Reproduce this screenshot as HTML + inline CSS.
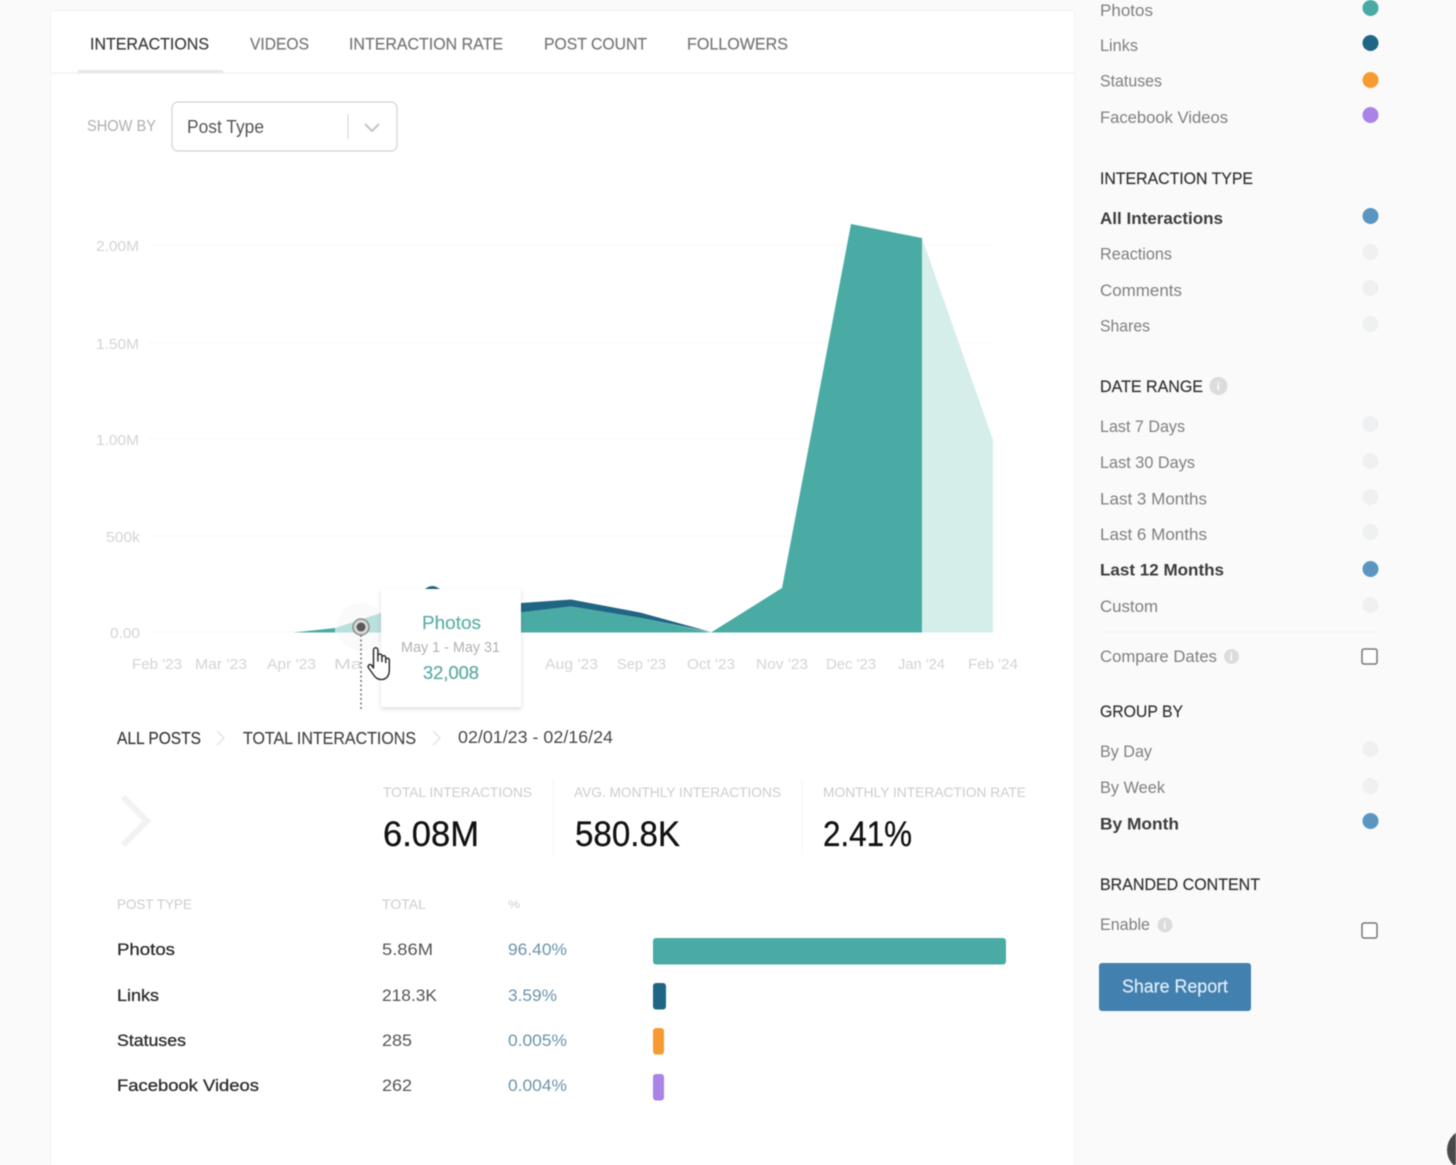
<!DOCTYPE html>
<html lang="en"><head><meta charset="utf-8"><title>Interactions report</title>
<style>
html,body{margin:0;padding:0;width:1456px;height:1165px;overflow:hidden;background:#fafafa}
svg{display:block;filter:blur(.4px)}
text{font-family:"Liberation Sans",sans-serif}
.tab{font-size:17px;fill:#777;stroke:#777;stroke-width:.2}
.h{font-size:17px;fill:#333;stroke:#333;stroke-width:.2}
.i{font-size:16.5px;fill:#808080}
.b{font-size:16.5px;fill:#3d3d3d;font-weight:bold}
.ax{font-size:15px;fill:#d4d4d4}
.cap{font-size:14px;fill:#cdcdcd}
.big{font-size:35px;fill:#111;stroke:#111;stroke-width:.3}
.n{font-size:17px;fill:#2c2c2c;stroke:#2c2c2c;stroke-width:.3}
.v{font-size:17px;fill:#555}
.p{font-size:17px;fill:#6b93ab}
.off{fill:#eff0f1}
.on{fill:#5b96c2}
.inf{fill:#dcdcdc}
.inft{font-size:11px;fill:#fff;font-weight:bold}
.cb{fill:#fff;stroke:#777;stroke-width:1.5}
</style></head><body>
<svg width="1456" height="1165" viewBox="0 0 1456 1165" xmlns="http://www.w3.org/2000/svg">
<defs><filter id="s" x="-20%" y="-20%" width="140%" height="140%"><feDropShadow dx="0" dy="2" stdDeviation="2.500" flood-color="#000" flood-opacity=".14"/></filter></defs>
<rect width="1456" height="1165" fill="#fafafa"/>
<rect x="50" y="10" width="1025" height="1170" rx="3" fill="#f3f3f3"/>
<rect x="51" y="11" width="1023" height="1170" rx="3" fill="#fff"/>

<line x1="51" y1="73" x2="1074" y2="73" stroke="#f2f2f2" stroke-width="1.5"/>
<rect x="78" y="70" width="145" height="3" fill="#e8e8e8"/>
<text class="tab" style="fill:#3c3c3c;stroke:#3c3c3c" x="90" y="49.500" textLength="119" lengthAdjust="spacingAndGlyphs">INTERACTIONS</text>
<text class="tab" x="250" y="49.500" textLength="59" lengthAdjust="spacingAndGlyphs">VIDEOS</text>
<text class="tab" x="349" y="49.500" textLength="154" lengthAdjust="spacingAndGlyphs">INTERACTION RATE</text>
<text class="tab" x="544" y="49.500" textLength="103" lengthAdjust="spacingAndGlyphs">POST COUNT</text>
<text class="tab" x="687" y="49.500" textLength="101" lengthAdjust="spacingAndGlyphs">FOLLOWERS</text>

<text x="87" y="131" font-size="15.500" fill="#aeaeae" textLength="69" lengthAdjust="spacingAndGlyphs">SHOW BY</text>
<rect x="172" y="102" width="225" height="49" rx="6" fill="#fff" stroke="#d2d2d2" stroke-width="1.200"/>
<text x="187" y="133" font-size="18" fill="#555" textLength="77" lengthAdjust="spacingAndGlyphs">Post Type</text>
<line x1="348" y1="114" x2="348" y2="139" stroke="#d0d0d0"/>
<path d="M365 124l7 7 7-7" fill="none" stroke="#c4c4c4" stroke-width="2"/>

<g stroke="#fafafa" stroke-width="1">
<line x1="148" y1="245" x2="992" y2="245"/><line x1="148" y1="343" x2="992" y2="343"/>
<line x1="148" y1="439" x2="992" y2="439"/><line x1="148" y1="536" x2="992" y2="536"/>
<line x1="148" y1="632" x2="992" y2="632"/>
</g>
<text class="ax" x="96" y="251" textLength="43" lengthAdjust="spacingAndGlyphs">2.00M</text>
<text class="ax" x="96" y="349" textLength="43" lengthAdjust="spacingAndGlyphs">1.50M</text>
<text class="ax" x="96" y="445" textLength="43" lengthAdjust="spacingAndGlyphs">1.00M</text>
<text class="ax" x="106" y="542" textLength="34" lengthAdjust="spacingAndGlyphs">500k</text>
<text class="ax" x="110" y="638" textLength="30" lengthAdjust="spacingAndGlyphs">0.00</text>

<path d="M922 238L993 440V632.500H922Z" fill="#d6eeea"/>
<path d="M293 632.500L335 628V632.500Z" fill="#4aaba5"/>
<path d="M424 590Q432 582 441 590Z" fill="#1f6685"/>
<path d="M521 603L571 599.500L641 612.700L711 632L641 618L571 606.500L521 612.500Z" fill="#1f6685"/>
<path d="M521 612.500L571 606.500L641 618L711 632.500H521Z" fill="#4aaba5"/>
<path d="M711 632.500L782 588L851 224L922 238V632.500Z" fill="#4aaba5"/>

<circle cx="361" cy="627" r="24" fill="#fafafa"/>
<path d="M335 628L381 613V632.500H335Z" fill="#b9e0dc"/>
<circle cx="361" cy="627" r="8" fill="#d8d8d8" stroke="#8c8c8c" stroke-width="1.500"/>
<circle cx="361" cy="627" r="4.500" fill="#5a5a5a"/>
<line x1="361" y1="635" x2="361" y2="710" stroke="#777" stroke-width="1.600" stroke-dasharray="2 2.500"/>

<text class="ax" x="132" y="669" textLength="50" lengthAdjust="spacingAndGlyphs">Feb '23</text>
<text class="ax" x="195" y="669" textLength="52" lengthAdjust="spacingAndGlyphs">Mar '23</text>
<text class="ax" x="267" y="669" textLength="49" lengthAdjust="spacingAndGlyphs">Apr '23</text>
<text class="ax" x="334" y="669" textLength="28" lengthAdjust="spacingAndGlyphs">Ma</text>
<text class="ax" x="545" y="669" textLength="53" lengthAdjust="spacingAndGlyphs">Aug '23</text>
<text class="ax" x="617" y="669" textLength="49" lengthAdjust="spacingAndGlyphs">Sep '23</text>
<text class="ax" x="687" y="669" textLength="48" lengthAdjust="spacingAndGlyphs">Oct '23</text>
<text class="ax" x="756" y="669" textLength="52" lengthAdjust="spacingAndGlyphs">Nov '23</text>
<text class="ax" x="826" y="669" textLength="50" lengthAdjust="spacingAndGlyphs">Dec '23</text>
<text class="ax" x="898" y="669" textLength="47" lengthAdjust="spacingAndGlyphs">Jan '24</text>
<text class="ax" x="968" y="669" textLength="50" lengthAdjust="spacingAndGlyphs">Feb '24</text>

<rect x="381" y="589" width="140" height="118" rx="1" fill="#fff" filter="url(#s)"/>
<text x="422" y="629" font-size="18" fill="#5db0a8" stroke="#5db0a8" stroke-width=".2" textLength="59" lengthAdjust="spacingAndGlyphs">Photos</text>
<text x="401" y="652" font-size="14.500" fill="#b2b2b2" textLength="99" lengthAdjust="spacingAndGlyphs">May 1 - May 31</text>
<text x="423" y="679" font-size="18" fill="#62ada5" stroke="#62ada5" stroke-width=".3" textLength="56" lengthAdjust="spacingAndGlyphs">32,008</text>

<path d="M373.500 668V650a2.200 2.200 0 0 1 4.400 0V661V656a2 2 0 0 1 4 0V661.500V657.500a1.900 1.900 0 0 1 3.800 0V662.500V660a1.800 1.800 0 0 1 3.600 0V670c0 6-3 9.500-8 9.500c-4 0-6-2-8-5l-5-7a2 2 0 0 1 3-2.500Z" fill="#fff" stroke="#333" stroke-width="1.500" stroke-linejoin="round"/>

<text x="117" y="744" font-size="17.500" fill="#3a3a3a" stroke="#3a3a3a" stroke-width=".2" textLength="84" lengthAdjust="spacingAndGlyphs">ALL POSTS</text>
<path d="M217 731l7 7-7 7" fill="none" stroke="#e4e4e4" stroke-width="1.500"/>
<text x="243" y="744" font-size="17.500" fill="#484848" stroke="#484848" stroke-width=".2" textLength="173" lengthAdjust="spacingAndGlyphs">TOTAL INTERACTIONS</text>
<path d="M433 731l7 7-7 7" fill="none" stroke="#e4e4e4" stroke-width="1.500"/>
<text x="458" y="743" font-size="17.500" fill="#4a4a4a" textLength="155" lengthAdjust="spacingAndGlyphs">02/01/23 - 02/16/24</text>

<path d="M123 797l24 24-24 24" fill="none" stroke="#f2f2f2" stroke-width="6"/>
<text class="cap" x="383" y="797" textLength="149" lengthAdjust="spacingAndGlyphs">TOTAL INTERACTIONS</text>
<text class="cap" x="574" y="797" textLength="207" lengthAdjust="spacingAndGlyphs">AVG. MONTHLY INTERACTIONS</text>
<text class="cap" x="823" y="797" textLength="203" lengthAdjust="spacingAndGlyphs">MONTHLY INTERACTION RATE</text>
<line x1="553" y1="780" x2="553" y2="855" stroke="#f6f6f6"/>
<line x1="802" y1="780" x2="802" y2="855" stroke="#f6f6f6"/>
<text class="big" x="383" y="846" textLength="96" lengthAdjust="spacingAndGlyphs">6.08M</text>
<text class="big" x="575" y="846" textLength="105" lengthAdjust="spacingAndGlyphs">580.8K</text>
<text class="big" x="823" y="846" textLength="89" lengthAdjust="spacingAndGlyphs">2.41%</text>

<text class="cap" x="117" y="909" textLength="75" lengthAdjust="spacingAndGlyphs">POST TYPE</text>
<text class="cap" x="382" y="909" textLength="44" lengthAdjust="spacingAndGlyphs">TOTAL</text>
<text class="cap" x="508" y="908" style="font-size:11px" textLength="12" lengthAdjust="spacingAndGlyphs">%</text>

<text class="n" x="117" y="955" textLength="58" lengthAdjust="spacingAndGlyphs">Photos</text>
<text class="v" x="382" y="955" textLength="51" lengthAdjust="spacingAndGlyphs">5.86M</text>
<text class="p" x="508" y="955" textLength="59" lengthAdjust="spacingAndGlyphs">96.40%</text>
<rect x="653" y="938" width="353" height="26.500" rx="3" fill="#4aaba5"/>

<text class="n" x="117" y="1001" textLength="42" lengthAdjust="spacingAndGlyphs">Links</text>
<text class="v" x="382" y="1001" textLength="55" lengthAdjust="spacingAndGlyphs">218.3K</text>
<text class="p" x="508" y="1001" textLength="49" lengthAdjust="spacingAndGlyphs">3.59%</text>
<rect x="653" y="983" width="13" height="26.500" rx="3" fill="#1f6685"/>

<text class="n" x="117" y="1046" textLength="69" lengthAdjust="spacingAndGlyphs">Statuses</text>
<text class="v" x="382" y="1046" textLength="30" lengthAdjust="spacingAndGlyphs">285</text>
<text class="p" x="508" y="1046" textLength="59" lengthAdjust="spacingAndGlyphs">0.005%</text>
<rect x="653" y="1028" width="11" height="26.500" rx="3" fill="#f69b32"/>

<text class="n" x="117" y="1091" textLength="142" lengthAdjust="spacingAndGlyphs">Facebook Videos</text>
<text class="v" x="382" y="1091" textLength="30" lengthAdjust="spacingAndGlyphs">262</text>
<text class="p" x="508" y="1091" textLength="59" lengthAdjust="spacingAndGlyphs">0.004%</text>
<rect x="653" y="1074" width="11" height="26.500" rx="3" fill="#a983e6"/>

<text class="i" x="1100" y="16" textLength="53" lengthAdjust="spacingAndGlyphs">Photos</text>
<text class="i" x="1100" y="51" textLength="38" lengthAdjust="spacingAndGlyphs">Links</text>
<text class="i" x="1100" y="86.500" textLength="62" lengthAdjust="spacingAndGlyphs">Statuses</text>
<text class="i" x="1100" y="123" textLength="128" lengthAdjust="spacingAndGlyphs">Facebook Videos</text>
<circle cx="1370.500" cy="8" r="8" fill="#4aaba5"/>
<circle cx="1370.500" cy="43" r="8" fill="#1f6685"/>
<circle cx="1370.500" cy="80" r="8" fill="#f69b32"/>
<circle cx="1370.500" cy="115" r="8" fill="#a983e6"/>

<text class="h" x="1100" y="184" textLength="153" lengthAdjust="spacingAndGlyphs">INTERACTION TYPE</text>
<text class="b" x="1100" y="224" textLength="123" lengthAdjust="spacingAndGlyphs">All Interactions</text>
<text class="i" x="1100" y="259.500" textLength="72" lengthAdjust="spacingAndGlyphs">Reactions</text>
<text class="i" x="1100" y="296" textLength="82" lengthAdjust="spacingAndGlyphs">Comments</text>
<text class="i" x="1100" y="331.500" textLength="50" lengthAdjust="spacingAndGlyphs">Shares</text>
<circle class="on" cx="1370.500" cy="216" r="8"/>
<circle class="off" cx="1370.500" cy="252" r="8"/>
<circle class="off" cx="1370.500" cy="288" r="8"/>
<circle class="off" cx="1370.500" cy="324" r="8"/>

<text class="h" x="1100" y="392" textLength="103" lengthAdjust="spacingAndGlyphs">DATE RANGE</text>
<circle class="inf" cx="1218.500" cy="386" r="9"/><text class="inft" x="1216.800" y="390">i</text>
<text class="i" x="1100" y="432" textLength="85" lengthAdjust="spacingAndGlyphs">Last 7 Days</text>
<text class="i" x="1100" y="468" textLength="95" lengthAdjust="spacingAndGlyphs">Last 30 Days</text>
<text class="i" x="1100" y="504.500" textLength="107" lengthAdjust="spacingAndGlyphs">Last 3 Months</text>
<text class="i" x="1100" y="540" textLength="107" lengthAdjust="spacingAndGlyphs">Last 6 Months</text>
<text class="b" x="1100" y="575.500" textLength="124" lengthAdjust="spacingAndGlyphs">Last 12 Months</text>
<text class="i" x="1100" y="612" textLength="58" lengthAdjust="spacingAndGlyphs">Custom</text>
<circle class="off" cx="1370.500" cy="424" r="8"/>
<circle class="off" cx="1370.500" cy="461" r="8"/>
<circle class="off" cx="1370.500" cy="497" r="8"/>
<circle class="off" cx="1370.500" cy="532" r="8"/>
<circle class="on" cx="1370.500" cy="569" r="8"/>
<circle class="off" cx="1370.500" cy="605" r="8"/>
<line x1="1100" y1="632" x2="1378" y2="632" stroke="#f2f2f2"/>
<text class="i" x="1100" y="662" textLength="117" lengthAdjust="spacingAndGlyphs">Compare Dates</text>
<circle class="inf" cx="1231.500" cy="656.500" r="7.500"/><text class="inft" x="1229.800" y="660.500">i</text>
<rect class="cb" x="1362" y="649" width="15" height="15" rx="2"/>

<text class="h" x="1100" y="717" textLength="83" lengthAdjust="spacingAndGlyphs">GROUP BY</text>
<text class="i" x="1100" y="757" textLength="52" lengthAdjust="spacingAndGlyphs">By Day</text>
<text class="i" x="1100" y="793" textLength="65" lengthAdjust="spacingAndGlyphs">By Week</text>
<text class="b" x="1100" y="829.500" textLength="79" lengthAdjust="spacingAndGlyphs">By Month</text>
<circle class="off" cx="1370.500" cy="749" r="8"/>
<circle class="off" cx="1370.500" cy="786" r="8"/>
<circle class="on" cx="1370.500" cy="821" r="8"/>

<text class="h" x="1100" y="890" textLength="160" lengthAdjust="spacingAndGlyphs">BRANDED CONTENT</text>
<text class="i" x="1100" y="930" textLength="50" lengthAdjust="spacingAndGlyphs">Enable</text>
<circle class="inf" cx="1165" cy="925" r="7.500"/><text class="inft" x="1163.300" y="929">i</text>
<rect class="cb" x="1362" y="923" width="15" height="15" rx="2"/>

<rect x="1099" y="963" width="152" height="48" rx="3" fill="#4280b0"/>
<text x="1122" y="992.500" font-size="18" fill="#e4eff6" stroke="#e4eff6" stroke-width=".15" textLength="106" lengthAdjust="spacingAndGlyphs">Share Report</text>

<circle cx="1468" cy="1150" r="21" fill="#4a4a48"/>
</svg>
</body></html>
